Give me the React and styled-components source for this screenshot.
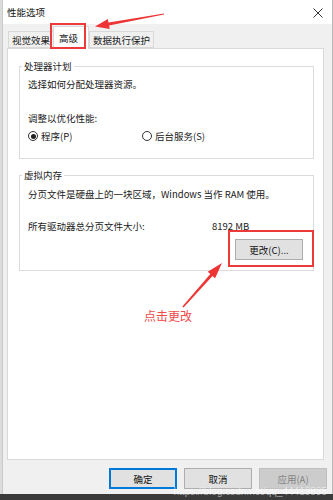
import styled, { createGlobalStyle } from 'styled-components';

const GlobalStyle = createGlobalStyle`
  html, body {
    margin: 0;
    padding: 0;
    background: #dcdcdc;
  }
  body {
    font-family: "Noto Sans CJK SC", "Noto Sans", sans-serif;
    font-size: 9.5px;
    color: #1a1a1a;
  }
`;

const Page = styled.div`
  position: relative;
  width: 333px;
  height: 500px;
  overflow: hidden;
  display: flex;
  flex-direction: column;
`;

const Window = styled.div`
  margin-left: 2px;
  width: 331px;
  height: 494px;
  box-sizing: border-box;
  background: #f0f0f0;
  border-right: 1px solid #b9b9b9;
  border-left: 1px solid #c9c9c9;
  display: flex;
  flex-direction: column;
`;

const TitleBar = styled.div`
  height: 24px;
  background: #fff;
  display: flex;
  align-items: center;
  justify-content: space-between;
  padding: 0 9px 0 4px;
  box-sizing: border-box;
  font-size: 9.5px;
  color: #111;
`;

const CloseIcon = styled.svg`
  width: 10px;
  height: 10px;
  margin-top: 1px;
`;

const TabStrip = styled.div`
  height: 24px;
  display: flex;
  align-items: flex-end;
  padding-left: 5px;
`;

const Tab = styled.div`
  height: ${p => (p.$active ? '23px' : '17px')};
  margin-bottom: ${p => (p.$active ? '-1px' : '0')};
  padding: 0 ${p => (p.$active ? '10px' : '3px')} 0 ${p => (p.$active ? '5px' : '3px')};
  box-sizing: border-box;
  display: flex;
  align-items: center;
  background: ${p => (p.$active ? '#fff' : '#f0f0f0')};
  border: 1px solid #d9d9d9;
  border-bottom: ${p => (p.$active ? 'none' : '1px solid #d9d9d9')};
  margin-right: ${p => (p.$active ? '0' : '-1px')};
  position: relative;
  z-index: ${p => (p.$active ? 2 : 1)};
  white-space: nowrap;
`;

const Panel = styled.div`
  margin-left: 4px;
  width: 317px;
  height: 412px;
  box-sizing: border-box;
  background: #fff;
  border: 1px solid #d9d9d9;
  padding: 9px 9px 0 11px;
  position: relative;
  z-index: 1;
`;

const Group = styled.fieldset`
  margin: ${p => p.$gap || 0}px 0 0 0;
  min-width: 0;
  border: 1px solid #dcdcdc;
  padding: ${p => p.$pad};
  padding-left: 8px;
`;

const Legend = styled.legend`
  padding: 0 2px;
  margin-left: -6px;
  line-height: 16px;
  color: #222;
`;

const Line = styled.div`
  line-height: 16px;
  margin-top: ${p => p.$mt || 0}px;
  white-space: nowrap;
`;

const RadioRow = styled.div`
  display: grid;
  grid-template-columns: 114px auto;
  margin-top: 2px;
  line-height: 16px;
`;

const Radio = styled.label`
  display: flex;
  align-items: center;
  gap: 3px;
`;

const RadioDot = styled.span`
  width: 10px;
  height: 10px;
  box-sizing: border-box;
  border-radius: 50%;
  border: 1px solid #333;
  display: flex;
  align-items: center;
  justify-content: center;
  &::after {
    content: '';
    width: 5px;
    height: 5px;
    border-radius: 50%;
    background: ${p => (p.$checked ? '#222' : 'transparent')};
  }
`;

const SizeRow = styled.div`
  display: grid;
  grid-template-columns: 184px auto;
  line-height: 16px;
  margin-top: 16px;
`;

const RightBox = styled.div`
  display: flex;
  justify-content: flex-end;
  padding-right: 2px;
  margin-top: 5px;
`;

const Button = styled.button`
  width: 68px;
  height: 21px;
  box-sizing: border-box;
  font-family: inherit;
  font-size: 9.5px;
  padding: 0;
  background: ${p => (p.$disabled ? '#cccccc' : '#e1e1e1')};
  color: ${p => (p.$disabled ? '#848484' : '#111')};
  border: ${p => (p.$primary ? '2px solid #0078d7' : p.$disabled ? '1px solid #bfbfbf' : '1px solid #adadad')};
`;

const ButtonRow = styled.div`
  display: flex;
  justify-content: flex-end;
  gap: 7px;
  padding: 8px 5px 0 0;
`;

const BottomBar = styled.div`
  flex: 1;
  background: #3b3b3b;
`;

const RedBox = styled.div`
  position: absolute;
  box-sizing: border-box;
  border: 2px solid #ec3a3a;
  left: ${p => p.$x}px;
  top: ${p => p.$y}px;
  width: ${p => p.$w}px;
  height: ${p => p.$h}px;
  z-index: 5;
`;

const Marks = styled.svg`
  position: absolute;
  left: 0;
  top: 0;
  width: 333px;
  height: 500px;
  pointer-events: none;
  z-index: 6;
`;

const Hint = styled.div`
  position: absolute;
  left: 144px;
  top: 308px;
  font-size: 12px;
  line-height: 16px;
  color: #f24a4a;
  z-index: 6;
`;

const Watermark = styled.div`
  position: absolute;
  right: 6px;
  top: 486px;
  font-size: 10px;
  line-height: 11px;
  font-family: "Liberation Sans", Arial, sans-serif;
  color: rgba(255, 255, 255, 0.55);
  z-index: 6;
  white-space: nowrap;
`;

export default function App() {
  return (
    <Page>
      <GlobalStyle />
      <Window>
        <TitleBar>
          <span>性能选项</span>
          <CloseIcon viewBox="0 0 10 10">
            <path d="M0.5 0.5 L9.5 9.5 M9.5 0.5 L0.5 9.5" stroke="#333" strokeWidth="1" />
          </CloseIcon>
        </TitleBar>
        <TabStrip>
          <Tab>视觉效果</Tab>
          <Tab $active>高级</Tab>
          <Tab>数据执行保护</Tab>
        </TabStrip>
        <Panel>
          <Group $pad="2px 10px 14px 8px">
            <Legend>处理器计划</Legend>
            <Line>选择如何分配处理器资源。</Line>
            <Line $mt={18}>调整以优化性能:</Line>
            <RadioRow>
              <Radio><RadioDot $checked />程序(P)</Radio>
              <Radio><RadioDot />后台服务(S)</Radio>
            </RadioRow>
          </Group>
          <Group $gap={8} $pad="3px 8px 10px 8px">
            <Legend>虚拟内存</Legend>
            <Line>分页文件是硬盘上的一块区域，Windows 当作 RAM 使用。</Line>
            <SizeRow>
              <span>所有驱动器总分页文件大小:</span>
              <span>8192 MB</span>
            </SizeRow>
            <RightBox>
              <Button>更改(C)...</Button>
            </RightBox>
          </Group>
        </Panel>
        <ButtonRow>
          <Button $primary>确定</Button>
          <Button>取消</Button>
          <Button $disabled>应用(A)</Button>
        </ButtonRow>
      </Window>
      <BottomBar />

      <RedBox $x={50} $y={23} $w={36} $h={26} />
      <RedBox $x={228} $y={230} $w={86} $h={37} />
      <Marks viewBox="0 0 333 500">
        <polygon
          fill="#ee3535"
          points="164,13.4 108.5,22.5 107.9,19.1 95,26.5 109.7,28.9 109.1,25.5 164,14.6"
        />
        <polygon
          fill="#ee3535"
          points="182.4,306.5 210.3,273.9 207.7,271.7 222,263 215.1,278.3 212.5,276.1 183.6,307.5"
        />
      </Marks>
      <Hint>点击更改</Hint>
      <Watermark>https://blog.csdn.net/qq_44413835</Watermark>
    </Page>
  );
}
